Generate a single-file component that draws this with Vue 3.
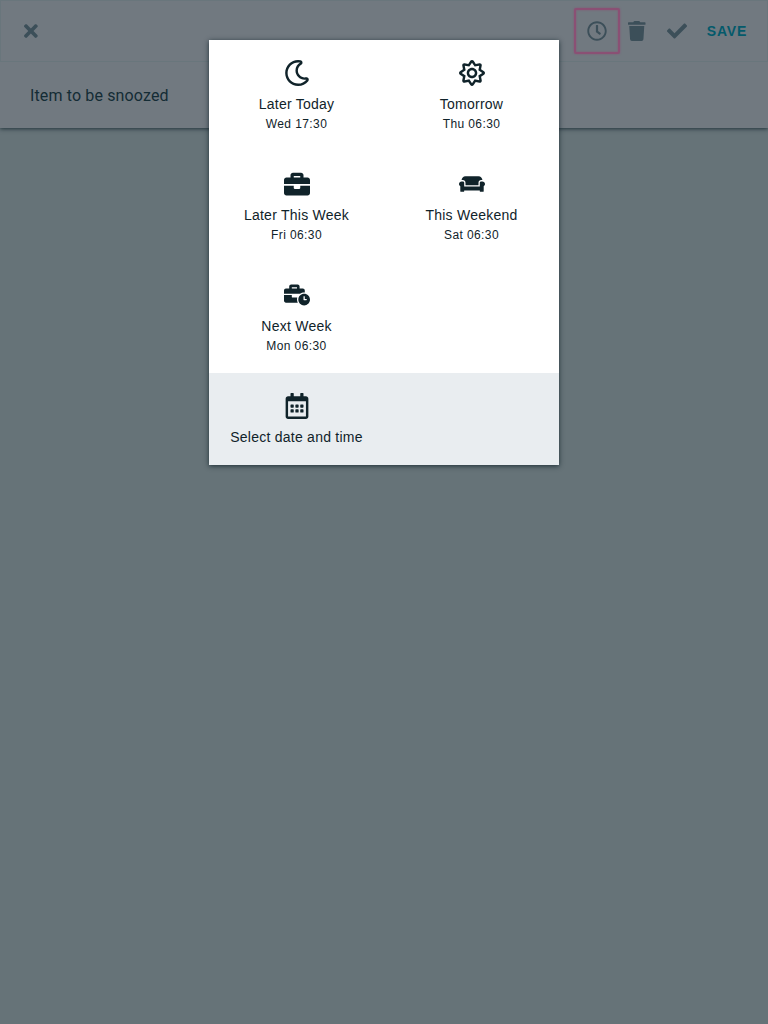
<script setup>
const icons = {
  close: { w: 352, d: 'M242.72 256l100.07-100.07c12.28-12.28 12.28-32.19 0-44.48l-22.24-22.24c-12.28-12.28-32.19-12.28-44.48 0L176 189.28 75.93 89.21c-12.28-12.28-32.19-12.28-44.48 0L9.21 111.45c-12.28 12.28-12.28 32.19 0 44.48L109.28 256 9.21 356.07c-12.28 12.28-12.28 32.19 0 44.48l22.24 22.24c12.28 12.28 32.2 12.28 44.48 0L176 322.72l100.07 100.07c12.28 12.28 32.2 12.28 44.48 0l22.24-22.24c12.28-12.28 12.28-32.19 0-44.48L242.72 256z' },
  clock: { w: 512, d: 'M256 8C119 8 8 119 8 256s111 248 248 248 248-111 248-248S393 8 256 8zm0 448c-110.5 0-200-89.5-200-200S145.5 56 256 56s200 89.5 200 200-89.5 200-200 200zm61.8-104.4l-84.9-61.7c-3.1-2.3-4.9-5.9-4.9-9.7V116c0-6.6 5.4-12 12-12h32c6.6 0 12 5.4 12 12v141.7l66.8 48.6c5.4 3.9 6.5 11.4 2.6 16.8L334.6 349c-3.9 5.3-11.4 6.5-16.8 2.6z' },
  trash: { w: 448, d: 'M432 32H312l-9.4-18.7A24 24 0 0 0 281.1 0H166.8a23.72 23.72 0 0 0-21.4 13.3L136 32H16A16 16 0 0 0 0 48v32a16 16 0 0 0 16 16h416a16 16 0 0 0 16-16V48a16 16 0 0 0-16-16zM53.2 467a48 48 0 0 0 47.9 45h245.8a48 48 0 0 0 47.9-45L416 128H32z' },
  check: { w: 512, d: 'M173.898 439.404l-166.4-166.4c-9.997-9.997-9.997-26.206 0-36.204l36.203-36.204c9.997-9.998 26.207-9.998 36.204 0L192 312.69 432.095 72.596c9.997-9.997 26.207-9.997 36.204 0l36.203 36.204c9.997 9.997 9.997 26.206 0 36.204l-294.4 294.401c-9.998 9.997-26.207 9.997-36.204-.001z' },
  moon: { w: 512, d: 'M279.135 512c78.756 0 150.982-35.804 198.844-94.775 28.27-34.831-2.558-85.722-46.249-77.401-82.348 15.683-158.272-47.268-158.272-130.792 0-48.424 26.06-92.292 67.434-115.836 38.745-22.05 28.999-80.788-15.022-88.919A257.936 257.936 0 0 0 279.135 0c-141.36 0-256 114.575-256 256 0 141.36 114.576 256 256 256zm0-464c12.985 0 25.689 1.201 38.016 3.478-54.76 31.163-91.693 90.042-91.693 157.554 0 113.848 103.641 199.2 215.252 177.944C402.574 433.964 344.366 464 279.135 464c-114.875 0-208-93.125-208-208s93.125-208 208-208z' },
  sun: { w: 512, d: 'M494.2 221.9l-59.8-40.5 13.7-71c2.6-13.2-1.6-26.8-11.1-36.4-9.6-9.5-23.2-13.7-36.2-11.1l-70.9 13.7-40.4-59.9c-15.1-22.3-51.9-22.3-67 0l-40.4 59.9-70.8-13.7C98 60.4 84.5 64.5 75 74.1c-9.5 9.6-13.7 23.1-11.1 36.3l13.7 71-59.8 40.5C6.6 229.5 0 242 0 255.5s6.7 26 17.8 33.5l59.8 40.5-13.7 71c-2.6 13.2 1.6 26.8 11.1 36.3 9.5 9.5 22.9 13.7 36.3 11.1l70.8-13.7 40.4 59.9C230 505.3 242.6 512 256 512s26-6.7 33.5-17.8l40.4-59.9 70.9 13.7c13.4 2.7 26.8-1.6 36.3-11.1 9.5-9.5 13.6-23.1 11.1-36.3l-13.7-71 59.8-40.5c11.1-7.5 17.8-20.1 17.8-33.6-.1-13.6-6.7-26.1-17.9-33.7zm-112.9 85.6l17.6 91.2-91-17.6L256 458l-51.9-77-90.9 17.6 17.6-91.2-76.8-52 76.8-52-17.6-91.2 91 17.6L256 53l51.9 76.9 91-17.6-17.6 91.1 76.8 52-76.8 52.1zM256 152c-57.3 0-104 46.7-104 104s46.7 104 104 104 104-46.7 104-104-46.7-104-104-104zm0 160c-30.9 0-56-25.1-56-56s25.1-56 56-56 56 25.1 56 56-25.1 56-56 56z' },
  briefcase: { w: 512, d: 'M320 336c0 8.84-7.16 16-16 16h-96c-8.84 0-16-7.16-16-16v-48H0v144c0 25.6 22.4 48 48 48h416c25.6 0 48-22.4 48-48V288H320v48zm144-208h-80V80c0-25.6-22.4-48-48-48H176c-25.6 0-48 22.4-48 48v48H48c-25.6 0-48 22.4-48 48v80h512v-80c0-25.6-22.4-48-48-48zm-144 0H192V96h128v32z' },
  couch: { w: 640, d: 'M160 224v64h320v-64c0-35.3 28.7-64 64-64h32c0-53-43-96-96-96H160c-53 0-96 43-96 96h32c35.3 0 64 28.7 64 64zm416-32h-32c-17.7 0-32 14.3-32 32v96H128v-96c0-17.7-14.3-32-32-32H64c-35.3 0-64 28.7-64 64 0 23.6 13 44 32 55.1V432c0 8.8 7.2 16 16 16h64c8.8 0 16-7.2 16-16v-16h384v16c0 8.8 7.2 16 16 16h64c8.8 0 16-7.2 16-16V311.1c19-11.1 32-31.5 32-55.1 0-35.3-28.7-64-64-64z' },
  businessTime: { w: 640, d: 'M496 224c-79.59 0-144 64.41-144 144s64.41 144 144 144 144-64.41 144-144-64.41-144-144-144zm64 150.29c0 5.34-4.37 9.71-9.71 9.71h-60.57c-5.34 0-9.71-4.37-9.71-9.71v-76.57c0-5.34 4.37-9.71 9.71-9.71h12.57c5.34 0 9.71 4.37 9.71 9.71V352h38.29c5.34 0 9.71 4.37 9.71 9.71v12.58zM496 192c5.4 0 10.72.33 16 .81V144c0-25.6-22.4-48-48-48h-80V48c0-25.6-22.4-48-48-48H176c-25.6 0-48 22.4-48 48v48H48c-25.6 0-48 22.4-48 48v80h395.12c28.6-20.09 63.35-32 100.88-32zM320 96H192V64h128v32zm6.82 224H208c-8.84 0-16-7.16-16-16v-48H0v144c0 25.6 22.4 48 48 48h291.43C327.1 423.96 320 396.82 320 368c0-16.66 2.48-32.72 6.82-48z' },
  calendar: { w: 448, d: 'M148 288h-40c-6.6 0-12-5.4-12-12v-40c0-6.6 5.4-12 12-12h40c6.6 0 12 5.4 12 12v40c0 6.6-5.4 12-12 12zm108-12v-40c0-6.6-5.4-12-12-12h-40c-6.6 0-12 5.4-12 12v40c0 6.6 5.4 12 12 12h40c6.6 0 12-5.4 12-12zm96 0v-40c0-6.6-5.4-12-12-12h-40c-6.6 0-12 5.4-12 12v40c0 6.6 5.4 12 12 12h40c6.6 0 12-5.4 12-12zm-96 96v-40c0-6.6-5.4-12-12-12h-40c-6.6 0-12 5.4-12 12v40c0 6.6 5.4 12 12 12h40c6.6 0 12-5.4 12-12zm-96 0v-40c0-6.6-5.4-12-12-12h-40c-6.6 0-12 5.4-12 12v40c0 6.6 5.4 12 12 12h40c6.6 0 12-5.4 12-12zm192 0v-40c0-6.6-5.4-12-12-12h-40c-6.6 0-12 5.4-12 12v40c0 6.6 5.4 12 12 12h40c6.6 0 12-5.4 12-12zm96-260v352c0 26.5-21.5 48-48 48H48c-26.5 0-48-21.5-48-48V112c0-26.5 21.5-48 48-48h48V12c0-6.6 5.4-12 12-12h40c6.6 0 12 5.4 12 12v52h128V12c0-6.6 5.4-12 12-12h40c6.6 0 12 5.4 12 12v52h48c26.5 0 48 21.5 48 48zm-48 346V160H48v298c0 3.3 2.7 6 6 6h340c3.3 0 6-2.7 6-6z' }
}

const options = [
  { icon: 'moon', label: 'Later Today', time: 'Wed 17:30' },
  { icon: 'sun', label: 'Tomorrow', time: 'Thu 06:30' },
  { icon: 'briefcase', label: 'Later This Week', time: 'Fri 06:30' },
  { icon: 'couch', label: 'This Weekend', time: 'Sat 06:30' },
  { icon: 'businessTime', label: 'Next Week', time: 'Mon 06:30' }
]

const box = (name) => `0 0 ${icons[name].w} 512`
</script>

<template>
  <div class="page">
    <section class="editor">
      <header class="toolbar">
        <button class="tool"><svg :viewBox="box('close')"><path :d="icons.close.d" /></svg></button>
        <div class="actions">
          <button class="tool snooze"><svg :viewBox="box('clock')"><path :d="icons.clock.d" /></svg></button>
          <button class="tool"><svg :viewBox="box('trash')"><path :d="icons.trash.d" /></svg></button>
          <button class="tool"><svg :viewBox="box('check')"><path :d="icons.check.d" /></svg></button>
          <button class="save">SAVE</button>
        </div>
      </header>
      <div class="title">Item to be snoozed</div>
    </section>

    <div class="dialog">
      <div class="grid">
        <button v-for="o in options" :key="o.label" class="option">
          <svg :viewBox="box(o.icon)"><path :d="icons[o.icon].d" /></svg>
          <span class="label">{{ o.label }}</span>
          <span class="time">{{ o.time }}</span>
        </button>
      </div>
      <div class="custom">
        <button class="option">
          <svg :viewBox="box('calendar')"><path :d="icons.calendar.d" /></svg>
          <span class="label">Select date and time</span>
        </button>
      </div>
    </div>
  </div>
</template>

<style>
body {
  background: #667378;
}
</style>

<style scoped>
.page {
  position: relative;
  height: 1024px;
  overflow: hidden;
  background: #667378;
  font-family: "Liberation Sans", Arial, sans-serif;
  color: #10232a;
}
button {
  margin: 0;
  padding: 0;
  border: 0;
  background: none;
  font: inherit;
  color: inherit;
}
.editor {
  height: 128px;
  background: #717980;
  box-shadow: 0 1px 4px rgba(16, 35, 42, 0.8);
}
.toolbar {
  box-sizing: border-box;
  height: 62px;
  padding: 0 10px 0 10px;
  display: flex;
  align-items: center;
  justify-content: space-between;
  border: 1px solid #69767c;
}
.actions {
  display: flex;
  align-items: center;
}
.tool {
  width: 40px;
  height: 40px;
  display: flex;
  align-items: center;
  justify-content: center;
}
.tool svg {
  height: 20px;
  fill: #3c4f59;
}
.snooze {
  position: relative;
}
.snooze::after {
  content: "";
  position: absolute;
  inset: -3px;
  border: 2px solid #8a5074;
  border-radius: 2px;
  box-shadow: 0 0 2px #8a5074, inset 0 0 2px #8a5074;
}
.save {
  width: 60px;
  font-size: 14px;
  font-weight: bold;
  letter-spacing: 0.9px;
  color: #045a6b;
}
.title {
  padding-left: 30px;
  line-height: 67px;
  font-family: Roboto, sans-serif;
  font-size: 16px;
  letter-spacing: 0.14px;
  color: #142c35;
}
.dialog {
  position: absolute;
  top: 40px;
  left: 209px;
  width: 350px;
  background: #fff;
  box-shadow: 0 1px 5px rgba(16, 35, 42, 0.85);
}
.grid {
  display: grid;
  grid-template-columns: 175px 175px;
  grid-auto-rows: 111px;
}
.custom {
  height: 92px;
  background: #e9edf0;
}
.option {
  width: 175px;
  padding-top: 20px;
  display: flex;
  flex-direction: column;
  align-items: center;
}
.option svg {
  width: 26px;
  height: 26px;
  fill: #10232a;
}
.label {
  margin-top: 8px;
  font-size: 14px;
  line-height: 20px;
  letter-spacing: 0.25px;
}
.time {
  font-size: 12px;
  line-height: 20px;
  letter-spacing: 0.4px;
}
</style>
